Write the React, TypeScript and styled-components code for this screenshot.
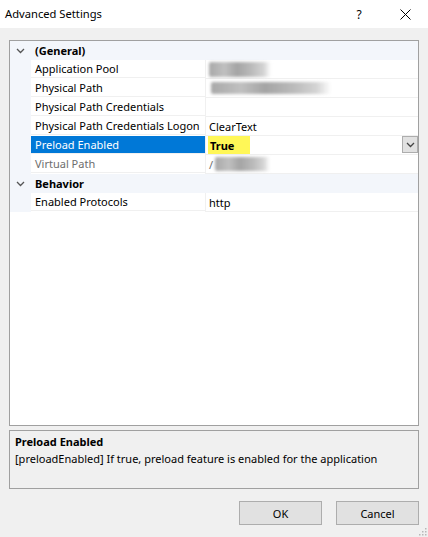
import React from "react";
import styled, { createGlobalStyle } from "styled-components";

const GlobalStyle = createGlobalStyle`
  html, body {
    margin: 0;
    padding: 0;
    background: #f0f0f0;
  }
  body {
    font-family: "Segoe UI", "Noto Sans", "Liberation Sans", sans-serif;
    font-size: 11px;
    color: #000;
  }
`;

const Window = styled.div`
  width: 428px;
  height: 537px;
  display: flex;
  flex-direction: column;
  background: #f0f0f0;
  position: relative;
  overflow: hidden;
`;

const TitleBar = styled.div`
  height: 28px;
  background: #fff;
  display: flex;
  align-items: center;
  padding-left: 5px;
`;

const Title = styled.div`
  flex: 1;
  font-size: 11.2px;
  padding-bottom: 2px;
`;

const TitleButton = styled.div`
  width: 46px;
  height: 28px;
  display: flex;
  align-items: center;
  justify-content: center;
  font-size: 12px;
`;

const Body = styled.div`
  flex: 1;
  display: flex;
  flex-direction: column;
  padding: 12px 9px 12px 9px;
`;

const Grid = styled.div`
  height: 384px;
  border: 1px solid #a0a0a0;
  background: #fff;
  display: flex;
  flex-direction: column;
`;

const CategoryRow = styled.div`
  height: 19px;
  display: flex;
  align-items: center;
  background: #f3f6fb;
  font-weight: bold;
`;

const Gutter = styled.div`
  width: 21px;
  height: 19px;
  flex: none;
  display: flex;
  align-items: center;
  justify-content: center;
  background: #f3f6fb;
`;

const CategoryName = styled.div`
  padding-left: 4px;
`;

const PropRow = styled.div`
  height: 19px;
  display: flex;
`;

const NameCell = styled.div<{ $selected?: boolean; $disabled?: boolean }>`
  width: 174px;
  flex: none;
  height: 18px;
  border-bottom: 1px solid #f0f0f0;
  padding-left: 4px;
  box-sizing: border-box;
  display: flex;
  align-items: center;
  white-space: nowrap;
  overflow: hidden;
  background: ${(p) => (p.$selected ? "#0078d7" : "#fff")};
  color: ${(p) => (p.$selected ? "#fff" : p.$disabled ? "#6d6d6d" : "#000")};
`;

const ValueCell = styled.div<{ $disabled?: boolean }>`
  flex: 1;
  height: 18px;
  border-bottom: 1px solid #f0f0f0;
  border-left: 1px solid #f0f0f0;
  padding-left: 3px;
  display: flex;
  align-items: center;
  white-space: nowrap;
  color: ${(p) => (p.$disabled ? "#6d6d6d" : "#000")};
`;

const Highlight = styled.span`
  background: #fff757;
  font-weight: bold;
  height: 18px;
  width: 42px;
  display: flex;
  align-items: center;
  padding-left: 2px;
  box-sizing: border-box;
  margin-left: -1px;
`;

const DropButton = styled.div`
  margin-left: auto;
  width: 16px;
  height: 17px;
  box-sizing: border-box;
  border: 1px solid #adadad;
  background: #e1e1e1;
  display: flex;
  align-items: center;
  justify-content: center;
  align-self: flex-start;
`;

const Blur = styled.div<{ $w: number; $h: number; $ml?: number }>`
  width: ${(p) => p.$w}px;
  height: ${(p) => p.$h}px;
  margin-left: ${(p) => p.$ml ?? 0}px;
  background: linear-gradient(
    90deg,
    #a8a8a8 0%,
    #c0c0c0 25%,
    #a4a4a4 45%,
    #bcbcbc 70%,
    #d4d4d4 88%,
    rgba(255, 255, 255, 0) 100%
  );
  filter: blur(1.5px);
  border-radius: 2px;
`;

const Description = styled.div`
  margin-top: 4px;
  height: 59px;
  box-sizing: border-box;
  border: 1px solid #a0a0a0;
  padding: 3px 5px;
  display: flex;
  flex-direction: column;
  gap: 2px;
`;

const DescTitle = styled.div`
  font-weight: bold;
`;

const Buttons = styled.div`
  margin-top: 12px;
  display: flex;
  justify-content: flex-end;
  gap: 14px;
`;

const Button = styled.div`
  width: 83px;
  height: 24px;
  box-sizing: border-box;
  border: 1px solid #adadad;
  background: #e1e1e1;
  display: flex;
  align-items: center;
  justify-content: center;
`;

const Grip = styled.svg`
  position: absolute;
  right: 1px;
  bottom: 1px;
`;

const Chevron = ({ color = "#555" }: { color?: string }) => (
  <svg width="9" height="6" viewBox="0 0 9 6">
    <path d="M1 1 L4.5 4.5 L8 1" fill="none" stroke={color} strokeWidth="1.3" />
  </svg>
);

type Prop = {
  name: string;
  value?: React.ReactNode;
  selected?: boolean;
  disabled?: boolean;
};

const general: Prop[] = [
  { name: "Application Pool", value: <Blur $w={62} $h={15} /> },
  {
    name: "Physical Path",
    value: <Blur $w={120} $h={12} $ml={2} />,
  },
  { name: "Physical Path Credentials" },
  { name: "Physical Path Credentials Logon", value: "ClearText" },
  {
    name: "Preload Enabled",
    selected: true,
    value: (
      <>
        <Highlight>True</Highlight>
        <DropButton>
          <Chevron color="#444" />
        </DropButton>
      </>
    ),
  },
  {
    name: "Virtual Path",
    disabled: true,
    value: (
      <>
        /<Blur $w={55} $h={14} $ml={2} />
      </>
    ),
  },
];

const behavior: Prop[] = [{ name: "Enabled Protocols", value: "http" }];

const PropRows = ({ items }: { items: Prop[] }) => (
  <>
    {items.map((p) => (
      <PropRow key={p.name}>
        <Gutter />
        <NameCell $selected={p.selected} $disabled={p.disabled}>
          {p.name}
        </NameCell>
        <ValueCell $disabled={p.disabled}>{p.value}</ValueCell>
      </PropRow>
    ))}
  </>
);

const Category = ({ name }: { name: string }) => (
  <CategoryRow>
    <Gutter>
      <Chevron />
    </Gutter>
    <CategoryName>{name}</CategoryName>
  </CategoryRow>
);

export default function App() {
  return (
    <Window>
      <GlobalStyle />
      <TitleBar>
        <Title>Advanced Settings</Title>
        <TitleButton>?</TitleButton>
        <TitleButton>
          <svg width="11" height="11" viewBox="0 0 11 11">
            <path d="M0.5 0.5 L10.5 10.5 M10.5 0.5 L0.5 10.5" stroke="#000" strokeWidth="1" />
          </svg>
        </TitleButton>
      </TitleBar>
      <Body>
        <Grid>
          <Category name="(General)" />
          <PropRows items={general} />
          <Category name="Behavior" />
          <PropRows items={behavior} />
        </Grid>
        <Description>
          <DescTitle>Preload Enabled</DescTitle>
          <div>[preloadEnabled] If true, preload feature is enabled for the application</div>
        </Description>
        <Buttons>
          <Button>OK</Button>
          <Button>Cancel</Button>
        </Buttons>
      </Body>
      <Grip width="9" height="9" viewBox="0 0 9 9">
        {[
          [7, 1],
          [7, 4],
          [4, 4],
          [7, 7],
          [4, 7],
          [1, 7],
        ].map(([x, y]) => (
          <rect key={`${x}-${y}`} x={x} y={y} width="1.5" height="1.5" fill="#b8b8b8" />
        ))}
      </Grip>
    </Window>
  );
}
